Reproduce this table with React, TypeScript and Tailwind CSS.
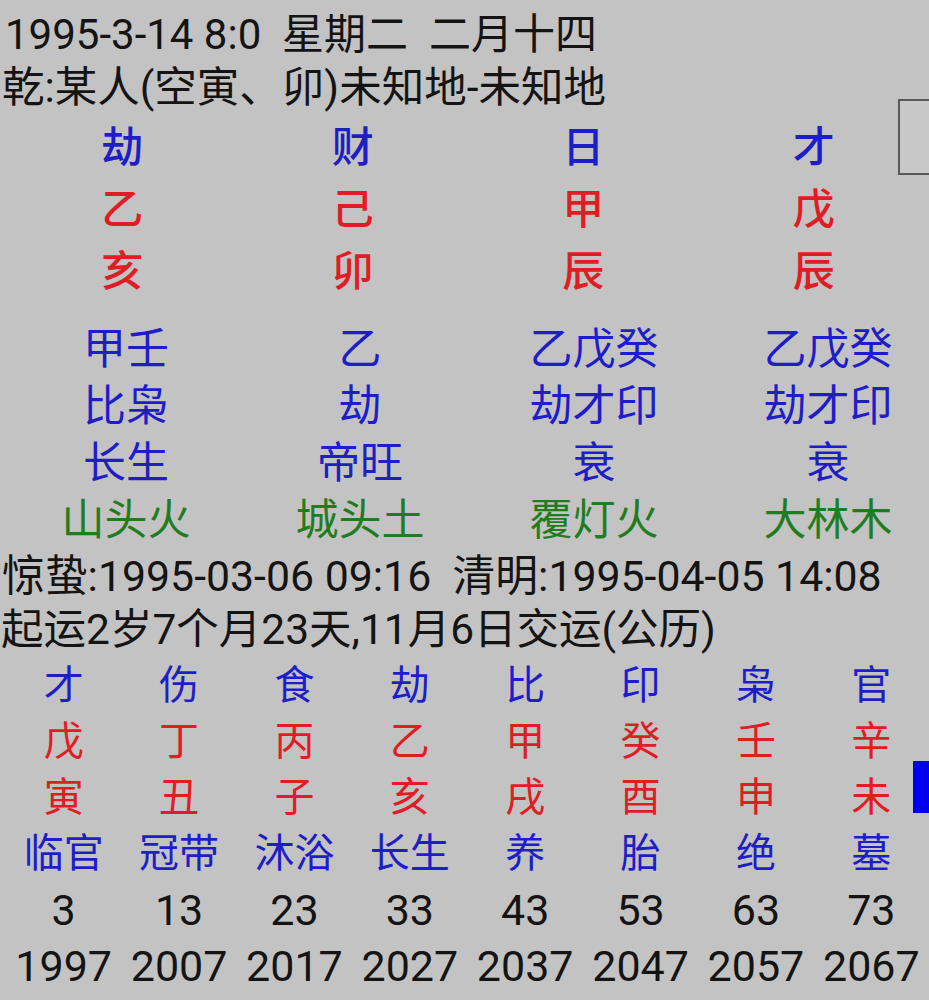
const BLUE = "text-[#1e1ec8]";
const RED = "text-[#e01c24]";
const GREEN = "text-[#1f7d1f]";

const PILLARS = [
  { shen: "劫", gan: "乙", zhi: "亥", cang: "甲壬", cangShen: "比枭", state: "长生", nayin: "山头火" },
  { shen: "财", gan: "己", zhi: "卯", cang: "乙", cangShen: "劫", state: "帝旺", nayin: "城头土" },
  { shen: "日", gan: "甲", zhi: "辰", cang: "乙戊癸", cangShen: "劫才印", state: "衰", nayin: "覆灯火" },
  { shen: "才", gan: "戊", zhi: "辰", cang: "乙戊癸", cangShen: "劫才印", state: "衰", nayin: "大林木" },
];

const DAYUN = [
  { shen: "才", gan: "戊", zhi: "寅", state: "临官", age: 3, year: 1997 },
  { shen: "伤", gan: "丁", zhi: "丑", state: "冠带", age: 13, year: 2007 },
  { shen: "食", gan: "丙", zhi: "子", state: "沐浴", age: 23, year: 2017 },
  { shen: "劫", gan: "乙", zhi: "亥", state: "长生", age: 33, year: 2027 },
  { shen: "比", gan: "甲", zhi: "戌", state: "养", age: 43, year: 2037 },
  { shen: "印", gan: "癸", zhi: "酉", state: "胎", age: 53, year: 2047 },
  { shen: "枭", gan: "壬", zhi: "申", state: "绝", age: 63, year: 2057 },
  { shen: "官", gan: "辛", zhi: "未", state: "墓", age: 73, year: 2067 },
];

function PillarRow({ items, color }: { items: string[]; color: string }) {
  return (
    <div className={`grid grid-cols-4 pl-[7px] h-[62px] leading-[62px] text-[42px] font-medium ${color}`}>
      {items.map((t, i) => (
        <div key={i} className="text-center">{t}</div>
      ))}
    </div>
  );
}

function CangRow({ items, color }: { items: string[]; color: string }) {
  return (
    <div className={`grid grid-cols-[repeat(4,234px)] pl-[9px] h-[57px] leading-[57px] text-[43px] ${color}`}>
      {items.map((t, i) => (
        <div key={i} className="text-center whitespace-nowrap">{t}</div>
      ))}
    </div>
  );
}

function DayunRow({
  items,
  color,
  size = "text-[40px]",
}: {
  items: (string | number)[];
  color: string;
  size?: string;
}) {
  return (
    <div className={`grid grid-cols-8 pl-[6px] h-[56px] leading-[56px] ${size} ${color}`}>
      {items.map((t, i) => (
        <div key={i} className="text-center whitespace-nowrap">{t}</div>
      ))}
    </div>
  );
}

export default function App() {
  return (
    <div
      className="relative h-[1000px] w-full overflow-hidden bg-[#c3c3c3] text-[#141414]"
      style={{ fontFamily: 'Roboto, "Noto Sans CJK SC", sans-serif' }}
    >
      <div className="pt-[8px]">
        <div className="pl-[5px] h-[53px] leading-[53px] text-[42px] whitespace-pre">
          1995-3-14 8:0  星期二  二月十四
        </div>
        <div className="pl-[2px] h-[53px] leading-[53px] text-[42.5px] whitespace-pre">
          乾:某人(空寅、卯)未知地-未知地
        </div>

        <div className="mt-[3px]">
          <PillarRow items={PILLARS.map((p) => p.shen)} color={BLUE} />
          <PillarRow items={PILLARS.map((p) => p.gan)} color={RED} />
          <PillarRow items={PILLARS.map((p) => p.zhi)} color={RED} />
        </div>

        <div className="mt-[18px]">
          <CangRow items={PILLARS.map((p) => p.cang)} color={BLUE} />
          <CangRow items={PILLARS.map((p) => p.cangShen)} color={BLUE} />
          <CangRow items={PILLARS.map((p) => p.state)} color={BLUE} />
          <CangRow items={PILLARS.map((p) => p.nayin)} color={GREEN} />
        </div>

        <div className="pl-[2px] h-[54px] leading-[54px] text-[42.8px] whitespace-pre">
          惊蛰:1995-03-06 09:16  清明:1995-04-05 14:08
        </div>
        <div className="pl-[1px] h-[54px] leading-[54px] text-[42.5px] whitespace-pre">
          起运2岁7个月23天,11月6日交运(公历)
        </div>

        <div className="mt-[1px]">
          <DayunRow items={DAYUN.map((d) => d.shen)} color={BLUE} />
          <DayunRow items={DAYUN.map((d) => d.gan)} color={RED} />
          <DayunRow items={DAYUN.map((d) => d.zhi)} color={RED} />
          <DayunRow items={DAYUN.map((d) => d.state)} color={BLUE} />
          <DayunRow items={DAYUN.map((d) => d.age)} color="text-[#141414]" size="text-[43px]" />
          <DayunRow items={DAYUN.map((d) => d.year)} color="text-[#141414]" size="text-[43px]" />
        </div>
      </div>

      {/* scroll handle / position marker on the right edge */}
      <div className="absolute left-[898px] top-[99px] h-[76px] w-[40px] border-2 border-[#5a5a5a] bg-[#c8c8c8]" />
      <div className="absolute left-[913px] top-[761px] h-[52px] w-[16px] bg-[#0000ee]" />
    </div>
  );
}
